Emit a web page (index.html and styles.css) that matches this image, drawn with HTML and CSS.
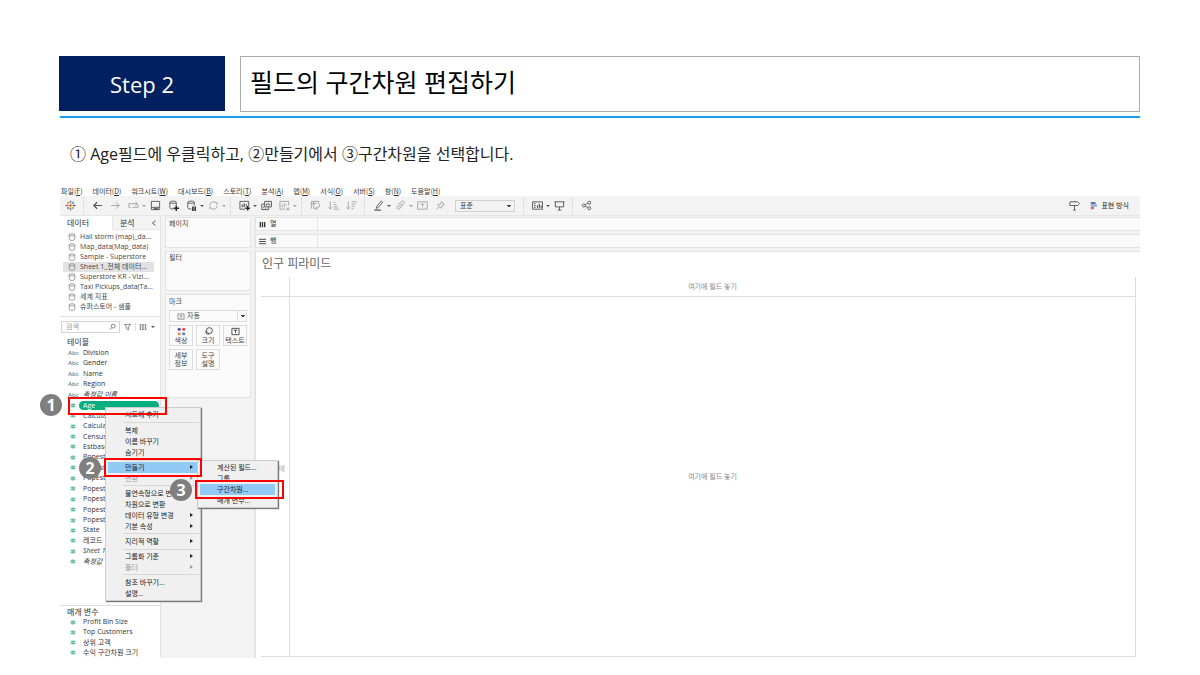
FILE: index.html
```html
<!DOCTYPE html>
<html lang="ko">
<head>
<meta charset="utf-8">
<title>Step 2</title>
<link rel="stylesheet" href="styles.css">
</head>
<body>
<svg width="0" height="0" class="defs" aria-hidden="true">
  <symbol id="db" viewBox="0 0 8 8"><path d="M1.200 1.800v4.400c0 1.600 5.600 1.600 5.600 0V1.800C6.800.4 1.200.4 1.200 1.800c0 1.500 5.600 1.500 5.600 0" fill="none" stroke="currentColor" stroke-width=".7"/></symbol>
  <symbol id="hash" viewBox="0 0 6 6"><path d="M2 .5v5M4 .5v5M0 2h6M0 4h6" stroke="#62b898" stroke-width="1.200" fill="none"/></symbol>
</svg>
<header class="head">
  <div class="step">Step 2</div>
  <h1 class="title">필드의 구간차원 편집하기</h1>
</header>
<p class="guide">① Age필드에 우클릭하고, ②만들기에서 ③구간차원을 선택합니다.</p>

<main class="app">
  <nav class="menubar">
    <span>파일(<u>F</u>)</span><span>데이터(<u>D</u>)</span><span>워크시트(<u>W</u>)</span><span>대시보드(<u>B</u>)</span><span>스토리(<u>T</u>)</span><span>분석(<u>A</u>)</span><span>맵(<u>M</u>)</span><span>서식(<u>O</u>)</span><span>서버(<u>S</u>)</span><span>창(<u>N</u>)</span><span>도움말(<u>H</u>)</span>
  </nav>

  <div class="toolbar">
    <button class="tool" aria-label="Tableau"><svg viewBox="0 0 12 12"><g stroke-width="1.200"><path d="M6 4v4M4 6h4" stroke="#e8762c"/><path d="M6 .5v3M4.800 2h2.400" stroke="#7a9cc6"/><path d="M6 8.500v3M4.800 10h2.400" stroke="#7199a6"/><path d="M.5 6h3M2 4.800v2.400" stroke="#c65a6a"/><path d="M8.500 6h3M10 4.800v2.400" stroke="#5b6591"/><path d="M2.200 3.200h2.400M3.400 2v2.400M7.400 8.800h2.400M8.600 7.600V10" stroke="#eb912c"/><path d="M7.400 3.200h2.400M8.600 2v2.400M2.200 8.800h2.400M3.400 7.600V10" stroke="#5c8db8"/></g></svg></button>
    <i class="sep"></i>
    <button class="tool" aria-label="뒤로"><svg viewBox="0 0 12 12"><path d="M11 6H2M5.500 2.500L2 6l3.500 3.500" stroke-width="1.300"/></svg></button>
    <button class="tool dim" aria-label="앞으로"><svg viewBox="0 0 12 12"><path d="M1 6h9M6.500 2.500L10 6 6.500 9.500"/></svg></button>
    <button class="tool dim" aria-label="되돌리기"><svg viewBox="0 0 12 12"><path d="M3 8H1V4h9M8 2l2.200 2L8 6M5 8h6V5"/></svg></button>
    <i class="caret dim"></i>
    <button class="tool" aria-label="저장"><svg viewBox="0 0 12 12"><path d="M1.500 1.500h9v9h-9zM1.500 8h9"/><path d="M4 8.500h5V11H4z" fill="#666" stroke="none"/></svg></button>
    <button class="tool" aria-label="새 데이터 원본"><svg viewBox="0 0 12 12"><path d="M9 6V2.500C9 .8 2 .8 2 2.500v6c0 1 2 1.500 4 1.500M2 2.500C2 4 9 4 9 2.500"/><path d="M9 6v6M6 9h6" stroke="#222" stroke-width="1.600"/></svg></button>
    <button class="tool" aria-label="업데이트 일시 중지"><svg viewBox="0 0 12 12"><path d="M9 6V2.500C9 .8 2 .8 2 2.500v6c0 1 2 1.500 4 1.500M2 2.500C2 4 9 4 9 2.500"/><path d="M7.500 7v5M10 7v5" stroke="#222" stroke-width="1.600"/></svg></button>
    <i class="caret"></i>
    <button class="tool dim" aria-label="새로 고침"><svg viewBox="0 0 12 12"><path d="M2 6a4 4 0 0 1 7.500-2M10 6a4 4 0 0 1-7.500 2M10 2v3M2 10V7"/></svg></button>
    <i class="caret dim"></i>
    <i class="sep"></i>
    <button class="tool" aria-label="새 워크시트"><svg viewBox="0 0 12 12"><path d="M7 10H1V1.500h9.500V7"/><path d="M3.500 8V5M5.700 8V3.500M8 7V4.500" stroke-width="1.300"/><path d="M9.500 6.500v5M7 9h5" stroke="#222" stroke-width="1.500"/></svg></button>
    <i class="caret"></i>
    <button class="tool" aria-label="복제"><svg viewBox="0 0 12 12"><path d="M4 1.500h7.500v6H4zM4 4.500H.8v6h7.500v-3M6 6V4M7.800 6V3M9.600 6V4M3 9V7M5 9.500V8.500"/></svg></button>
    <button class="tool dim" aria-label="지우기"><svg viewBox="0 0 12 12"><path d="M7 10H1V1.500h9.500V6M3.500 8V5M5.700 8V3.500M8 6V4.500M8 8l3.500 3.500M11.500 8L8 11.500"/></svg></button>
    <i class="caret dim"></i>
    <i class="sep"></i>
    <button class="tool dim" aria-label="행과 열 바꾸기"><svg viewBox="0 0 12 12"><path d="M1.500 9.500v-8h8V4M1.500 4h6M4 1.500v8h2M10.500 4.500c0 3-1 4.500-4 4.500M8 7L6 9l2 2"/></svg></button>
    <button class="tool dim" aria-label="오름차순"><svg viewBox="0 0 12 12"><path d="M2.500 1.500v8M.8 8l1.700 2 1.700-2M6 2.500h2M6 5h3M6 7.500h4.500M6 10h6"/></svg></button>
    <button class="tool dim" aria-label="내림차순"><svg viewBox="0 0 12 12"><path d="M2.500 1.500v8M.8 8l1.700 2 1.700-2M6 2h6M6 4.500h4.500M6 7h3M6 9.500h2"/></svg></button>
    <i class="sep"></i>
    <button class="tool" aria-label="강조"><svg viewBox="0 0 12 12"><path d="M4 7l5-6 1.500 1.500L5.500 8.500 3.500 9z"/><path d="M1.500 11h7" stroke-width="1.400"/></svg></button>
    <i class="caret"></i>
    <button class="tool dim" aria-label="그룹"><svg viewBox="0 0 12 12"><path d="M4 8l4-4.500M3 6l4-4.500c2-1.500 4 .5 2.500 2.500L5 9.500C3 11 1 9 3 6.500"/></svg></button>
    <i class="caret dim"></i>
    <button class="tool dim" aria-label="레이블"><svg viewBox="0 0 12 12"><path d="M.8 2h10.400v8H.8zM4 4.500h4M6 4.500V8"/></svg></button>
    <button class="tool dim" aria-label="고정"><svg viewBox="0 0 12 12"><path d="M7 1.500L10.500 5 8 5.500 6.500 9 3 5.500 6.500 4zM4.500 7.500L2 10"/></svg></button>
    <select class="fit" aria-label="맞춤"><option>표준</option></select>
    <i class="sep"></i>
    <button class="tool" aria-label="카드 표시"><svg viewBox="0 0 12 12"><path d="M.5 2h11v8H.5zM2 4h2M2 6h2M2 8h2"/><path d="M6 8.500V6M8 8.500V4M10 8.500V6" stroke-width="1.300"/></svg></button>
    <i class="caret"></i>
    <button class="tool" aria-label="프레젠테이션"><svg viewBox="0 0 12 12"><path d="M.5 2h11M1.500 2v5.500h9V2M6 7.500V11M4 11h4"/></svg></button>
    <i class="sep"></i>
    <button class="tool" aria-label="공유"><svg viewBox="0 0 12 12"><circle cx="3" cy="6" r="1.600"/><circle cx="9" cy="3" r="1.600"/><circle cx="9" cy="9" r="1.600"/><path d="M4.500 5.300L7.500 3.700M4.500 6.700L7.500 8.300"/></svg></button>
    <button class="tool guidepost" aria-label="안내"><svg viewBox="0 0 12 12"><path d="M1 2h8.500L11.500 4 9.500 6H1zM6 6v5M4.500 11h3M6 1v1"/></svg></button>
    <button class="showme"><svg viewBox="0 0 10 10"><path d="M1 0h6v3H1z" fill="#6b6fae"/><path d="M1 3h8v3H1z" fill="#8fb2de"/><path d="M1 6h4v3H1z" fill="#e5606a"/></svg>표현 방식</button>
  </div>

  <div class="work">
    <aside class="data">
      <div class="tabs"><button class="tab on">데이터</button><button class="tab">분석<svg viewBox="0 0 6 6"><path d="M4.500.5L1.500 3l3 2.500" fill="none" stroke="#555"/></svg></button></div>
      <ul class="sources">
        <li><svg><use href="#db"/></svg>Hail storm (map)_da...</li>
        <li><svg><use href="#db"/></svg>Map_data(Map_data)</li>
        <li><svg><use href="#db"/></svg>Sample - Superstore</li>
        <li class="on"><svg><use href="#db"/></svg>Sheet 1_전체 데이터...</li>
        <li><svg><use href="#db"/></svg>Superstore KR - Vizi...</li>
        <li><svg><use href="#db"/></svg>Taxi Pickups_data(Ta...</li>
        <li><svg><use href="#db"/></svg>세계 지표</li>
        <li><svg><use href="#db"/></svg>슈퍼스토어 - 샘플</li>
      </ul>
      <div class="search">
        <label class="box"><input type="text" placeholder="검색" aria-label="검색"><svg viewBox="0 0 8 8"><circle cx="4.800" cy="3" r="2.200"/><path d="M3.200 4.600L1 7"/></svg></label>
        <svg viewBox="0 0 8 8"><path d="M.5 1h7L5 4v3.500L3 6V4z"/></svg>
        <svg class="grid" viewBox="0 0 8 8"><path d="M1.500 1v6M4 1v6M6.500 1v6" stroke-width="1.500"/><path d="M0 3h8M0 5h8" stroke="#fff" stroke-width=".5"/></svg>
        <i class="caret"></i>
      </div>
      <h2 class="sub">테이블</h2>
      <ul class="fields">
        <li><b>Abc</b>Division</li><li><b>Abc</b>Gender</li><li><b>Abc</b>Name</li><li><b>Abc</b>Region</li><li><b>Abc</b><em>측정값 이름</em></li>
        <li><svg><use href="#hash"/></svg><span class="pill">Age</span></li>
        <li><svg><use href="#hash"/></svg>Calculation1</li><li><svg><use href="#hash"/></svg>Calculation2</li><li><svg><use href="#hash"/></svg>Census</li><li><svg><use href="#hash"/></svg>Estbase</li>
        <li><svg><use href="#hash"/></svg>Popest</li><li><svg><use href="#hash"/></svg>Popest</li><li><svg><use href="#hash"/></svg>Popest</li><li><svg><use href="#hash"/></svg>Popest</li><li><svg><use href="#hash"/></svg>Popest</li><li><svg><use href="#hash"/></svg>Popest</li><li><svg><use href="#hash"/></svg>Popest</li>
        <li><svg><use href="#hash"/></svg>State</li><li><svg><use href="#hash"/></svg>레코드</li><li><svg><use href="#hash"/></svg><em>Sheet 1</em></li><li><svg><use href="#hash"/></svg><em>측정값</em></li>
      </ul>
      <section class="params">
        <h2 class="sub">매개 변수</h2>
        <ul class="fields short">
          <li><svg><use href="#hash"/></svg>Profit Bin Size</li><li><svg><use href="#hash"/></svg>Top Customers</li><li><svg><use href="#hash"/></svg>상위 고객</li><li><svg><use href="#hash"/></svg>수익 구간차원 크기</li>
        </ul>
      </section>
    </aside>

    <aside class="cards">
      <section class="card pages">페이지</section>
      <section class="card filters">필터</section>
      <section class="card marks">
        <h2>마크</h2>
        <div class="marktype"><svg viewBox="0 0 8 8"><path d="M.5 1h7v6h-7zM2.500 3h3M4 3v3"/></svg><select aria-label="마크 유형"><option>자동</option></select></div>
        <div class="markgrid">
          <button><svg viewBox="0 0 10 10"><g stroke="none"><circle cx="2.500" cy="2.500" r="1.800" fill="#5b4f8e"/><circle cx="7.500" cy="2.500" r="1.800" fill="#e5495a"/><circle cx="2.500" cy="7.500" r="1.800" fill="#ef8a5a"/><circle cx="7.500" cy="7.500" r="1.800" fill="#5d86c4"/></g></svg>색상</button>
          <button><svg viewBox="0 0 10 10"><circle cx="6" cy="4" r="3.300"/><path d="M3 3.500a2.500 2.500 0 1 0 3 4"/></svg>크기</button>
          <button><svg viewBox="0 0 10 10"><path d="M1 1.500h8v7H1zM3 3.500h4M5 3.500V7"/></svg>텍스트</button>
          <button>세부<br>정보</button>
          <button>도구<br>설명</button>
        </div>
      </section>
    </aside>

    <section class="view">
      <div class="shelf"><span><svg viewBox="0 0 8 8"><path d="M1.500 1v6M4 1v6M6.500 1v6" stroke-width="1.500"/></svg>열</span></div>
      <div class="shelf"><span><svg viewBox="0 0 8 8"><path d="M0 1.500h8M0 4h8M0 6.500h8"/></svg>행</span></div>
      <div class="sheet">
        <h2>인구 피라미드</h2>
        <div class="canvas">
          <div class="corner"></div><div class="drop">여기에 필드 놓기</div>
          <div class="drop side">에</div><div class="drop">여기에 필드 놓기</div>
        </div>
      </div>
    </section>
  </div>

  <div class="menu context" role="menu">
    <button>시트에 추가</button><hr class="wide">
    <button>복제</button><button>이름 바꾸기</button><button>숨기기</button><hr class="wide">
    <button class="on more">만들기</button><button class="more off">변환</button><hr>
    <button>불연속형으로 변환</button><button>차원으로 변환</button><button class="more">데이터 유형 변경</button><button class="more">기본 속성</button><hr>
    <button class="more">지리적 역할</button><hr class="wide">
    <button class="more">그룹화 기준</button><button class="more off">폴더</button><hr>
    <button>참조 바꾸기...</button><button>설명...</button>
  </div>
  <div class="menu create" role="menu">
    <button>계산된 필드...</button><button>그룹...</button><button class="on">구간차원...</button><button>매개 변수...</button>
  </div>
  <div class="mark m1"></div><div class="mark m2"></div><div class="mark m3"></div>
  <div class="num n1">1</div><div class="num n2">2</div><div class="num n3">3</div>
</main>
</body>
</html>
```
FILE: styles.css
```css
* { box-sizing: border-box; }
body { margin: 0; padding: 56px 60px 17px; background: #fff; color: #333; font-family: "Open Sans", "Noto Sans CJK KR", sans-serif; }
h1, h2, p, ul { margin: 0; padding: 0; font-weight: 400; list-style: none; }
button, select, input { font: inherit; color: inherit; border: 0; background: none; padding: 0; margin: 0; border-radius: 0; }
svg { flex: none; fill: none; stroke: currentColor; }
.defs { position: absolute; }

.head { display: flex; gap: 15px; padding-bottom: 4px; border-bottom: 2px solid #1e9bf0; }
.step { width: 166px; height: 55px; margin-left: -1px; background: #002060; color: #fff; font-size: 22px; line-height: 57px; text-align: center; }
.title { flex: 1; border: 1px solid #aaa; padding-left: 9px; color: #000; font-size: 25px; line-height: 50px; height: 56px; }
.guide { padding: 25px 10px 0; font-size: 16px; line-height: 22px; color: #222; }

.app { position: relative; margin-top: 19px; font-size: 7px; line-height: 10px; white-space: nowrap; }
.menubar { display: flex; gap: 10px; padding: 2px 1px 0; height: 12px; font-family: "Noto Sans CJK KR", sans-serif; }
.toolbar { display: flex; align-items: center; height: 20px; padding-left: 1px; background: #f3f3f3; border-bottom: 1px solid #e6e6e6; }
.tool { width: 18px; height: 18px; display: flex; align-items: center; justify-content: center; color: #555; }
.tool svg { width: 11px; height: 11px; }
.dim { opacity: .5; }
.caret { width: 4px; height: 2px; border: 2px solid transparent; border-top-color: #555; border-bottom: 0; }
.sep { width: 1px; height: 18px; margin: 0 4px; background: #e0e0e0; }
.fit { width: 60px; height: 12px; margin: 0 4px 0 6px; padding-left: 4px; border: 1px solid #d0d0d0; appearance: none; background: linear-gradient(#444, #444) 51px 4px / 4px 1px no-repeat, linear-gradient(#444, #444) 52px 5px / 2px 1px no-repeat; }
.guidepost { margin-left: auto; }
.showme { display: flex; align-items: center; gap: 3px; margin: 0 11px 0 7px; color: #222; }
.showme svg { width: 8px; height: 10px; stroke: none; }

.work { display: flex; min-height: 442px; background: #f3f3f3; }
.data { width: 101px; display: flex; flex-direction: column; background: #fff; border-right: 1px solid #e2e2e2; }
.tabs { display: flex; height: 14px; font-size: 8px; }
.tab { flex: 1; display: flex; align-items: center; justify-content: space-between; padding: 0 3px 0 7px; background: #f3f3f3; border: 1px solid #e6e6e6; border-width: 0 0 1px 1px; }
.tab.on { flex: none; width: 52px; background: #fff; border: 0; }
.tab svg { width: 6px; height: 6px; }
.sources { padding: 2px 6px 4px 3px; border-bottom: 1px solid #e4e4e4; color: #444; }
.sources li { display: flex; align-items: center; gap: 4px; height: 10px; padding-left: 5px; overflow: hidden; }
.sources .on { background: #e2e2e2; }
.sources svg { width: 8px; height: 8px; color: #777; }
.search { display: flex; align-items: center; gap: 4px; margin: 4px 5px 3px 1px; height: 12px; color: #777; }
.search svg { width: 7px; height: 8px; }
.search .box { display: flex; align-items: center; width: 59px; height: 12px; padding: 0 3px 0 4px; border: 1px solid #d4d4d4; }
.search input { width: 100%; min-width: 0; }
.search input::placeholder { color: #999; }
.search .grid { width: 12px; padding-left: 3px; border-left: 1px solid #ddd; }
.sub { padding-left: 7px; font-size: 8px; line-height: 11px; }
.fields { display: flex; flex-direction: column; justify-content: space-between; min-height: 219px; margin-top: 1px; }
.fields li { display: flex; align-items: center; height: 10px; padding-left: 8px; }
.fields b { width: 15px; color: #3f8fa8; font-size: 6px; font-weight: 600; }
.fields svg { width: 6px; height: 5px; margin: 0 7px 0 2px; }
.pill { flex: 1; margin: 0 1px 0 -4px; padding-left: 4px; line-height: 9px; border-radius: 5px; background: #07ae7f; color: #fff; }
.params { margin-top: auto; border-top: 1px solid #ddd; }
.fields.short { min-height: 41px; margin-top: 0; }

.cards { width: 94px; display: flex; flex-direction: column; gap: 3px; padding: 1px 3px 0 4px; color: #444; border-right: 1px solid #e6e6e6; }
.card { padding: 1px 3px; background: #fafafa; border: 1px solid #e3e3e3; }
.pages { height: 31px; }
.filters { height: 40px; }
.marks { height: 104px; }
.marks h2 { font-size: 7px; line-height: 12px; }
.marktype { display: flex; align-items: center; height: 12px; margin-top: 2px; padding-left: 7px; border: 1px solid #ddd; }
.marktype svg { width: 8px; height: 7px; color: #888; }
.marktype select { flex: 1; margin-left: 2px; height: 10px; padding-left: 0; appearance: none; background: linear-gradient(#ddd, #ddd) 50px 0 / 1px 10px no-repeat, linear-gradient(#444, #444) 54px 4px / 4px 1px no-repeat, linear-gradient(#444, #444) 55px 5px / 2px 1px no-repeat; }
.markgrid { display: grid; grid-template-columns: repeat(3, 1fr); gap: 3px; margin-top: 3px; }
.markgrid button { display: flex; flex-direction: column; align-items: center; justify-content: center; height: 21px; border: 1px solid #ddd; line-height: 8px; }
.markgrid svg { width: 9px; height: 9px; margin-bottom: 1px; }

.view { flex: 1; min-width: 0; display: flex; flex-direction: column; gap: 3px; padding-top: 1px; }
.shelf { height: 14px; display: flex; background: #fafafa; border: 1px solid #e3e3e3; border-right: 0; }
.shelf span { display: flex; align-items: center; gap: 4px; width: 62px; padding-left: 3px; border-right: 1px solid #e3e3e3; }
.shelf svg { width: 7px; height: 7px; }
.sheet { flex: 1; display: flex; flex-direction: column; background: #fff; border: 1px solid #e3e3e3; border-width: 1px 0 0 1px; padding: 2px 4px 1px 5px; }
.sheet h2 { padding-left: 1px; font-size: 12px; line-height: 20px; color: #666; }
.canvas { flex: 1; display: grid; grid-template: 20px 1fr / 29px 1fr; margin-top: 3px; border: 1px solid #ddd; border-width: 0 1px 1px 0; color: #888; }
.corner, .drop { display: flex; align-items: center; justify-content: center; }
.canvas > :nth-child(-n+2) { border-bottom: 1px solid #ddd; }
.canvas > :nth-child(odd) { border-right: 1px solid #ddd; }
.canvas .side { justify-content: flex-end; padding: 0 4px 16px 0; color: #aaa; }

.menu { position: absolute; display: flex; flex-direction: column; padding: 1px 2px; background: #f0f0f0; border: 1px solid #ccc; box-shadow: 1px 1px 1px #777; color: #222; }
.menu button { position: relative; height: 11px; padding-left: 17px; text-align: left; line-height: 11px; }
.menu hr { width: 76px; height: 1px; margin: 1px 0 2px 15px; border: 0; background: #d8d8d8; }
.menu .wide { margin-top: 2px; }
.menu .on { background: #91c9f7; }
.menu .off { color: #999; }
.more::after { content: ""; position: absolute; right: 5px; top: 3px; border: 2px solid transparent; border-left: 3px solid currentColor; border-right: 0; }
.context { left: 45px; top: 223px; width: 96px; height: 194px; }
.create { left: 137px; top: 276px; width: 81px; }
.mark { position: absolute; border: 2px solid #f00; }
.m1 { left: 8px; top: 213px; width: 99px; height: 18px; }
.m2 { left: 44px; top: 274px; width: 98px; height: 19px; }
.m3 { left: 135px; top: 296px; width: 89px; height: 19px; }
.num { position: absolute; width: 22px; height: 22px; border-radius: 50%; background: #7f7f7f; color: #fff; font-size: 16px; font-weight: 700; line-height: 22px; text-align: center; }
.n1 { left: -20px; top: 210px; }
.n2 { left: 19px; top: 273px; }
.n3 { left: 110px; top: 295px; }
```
